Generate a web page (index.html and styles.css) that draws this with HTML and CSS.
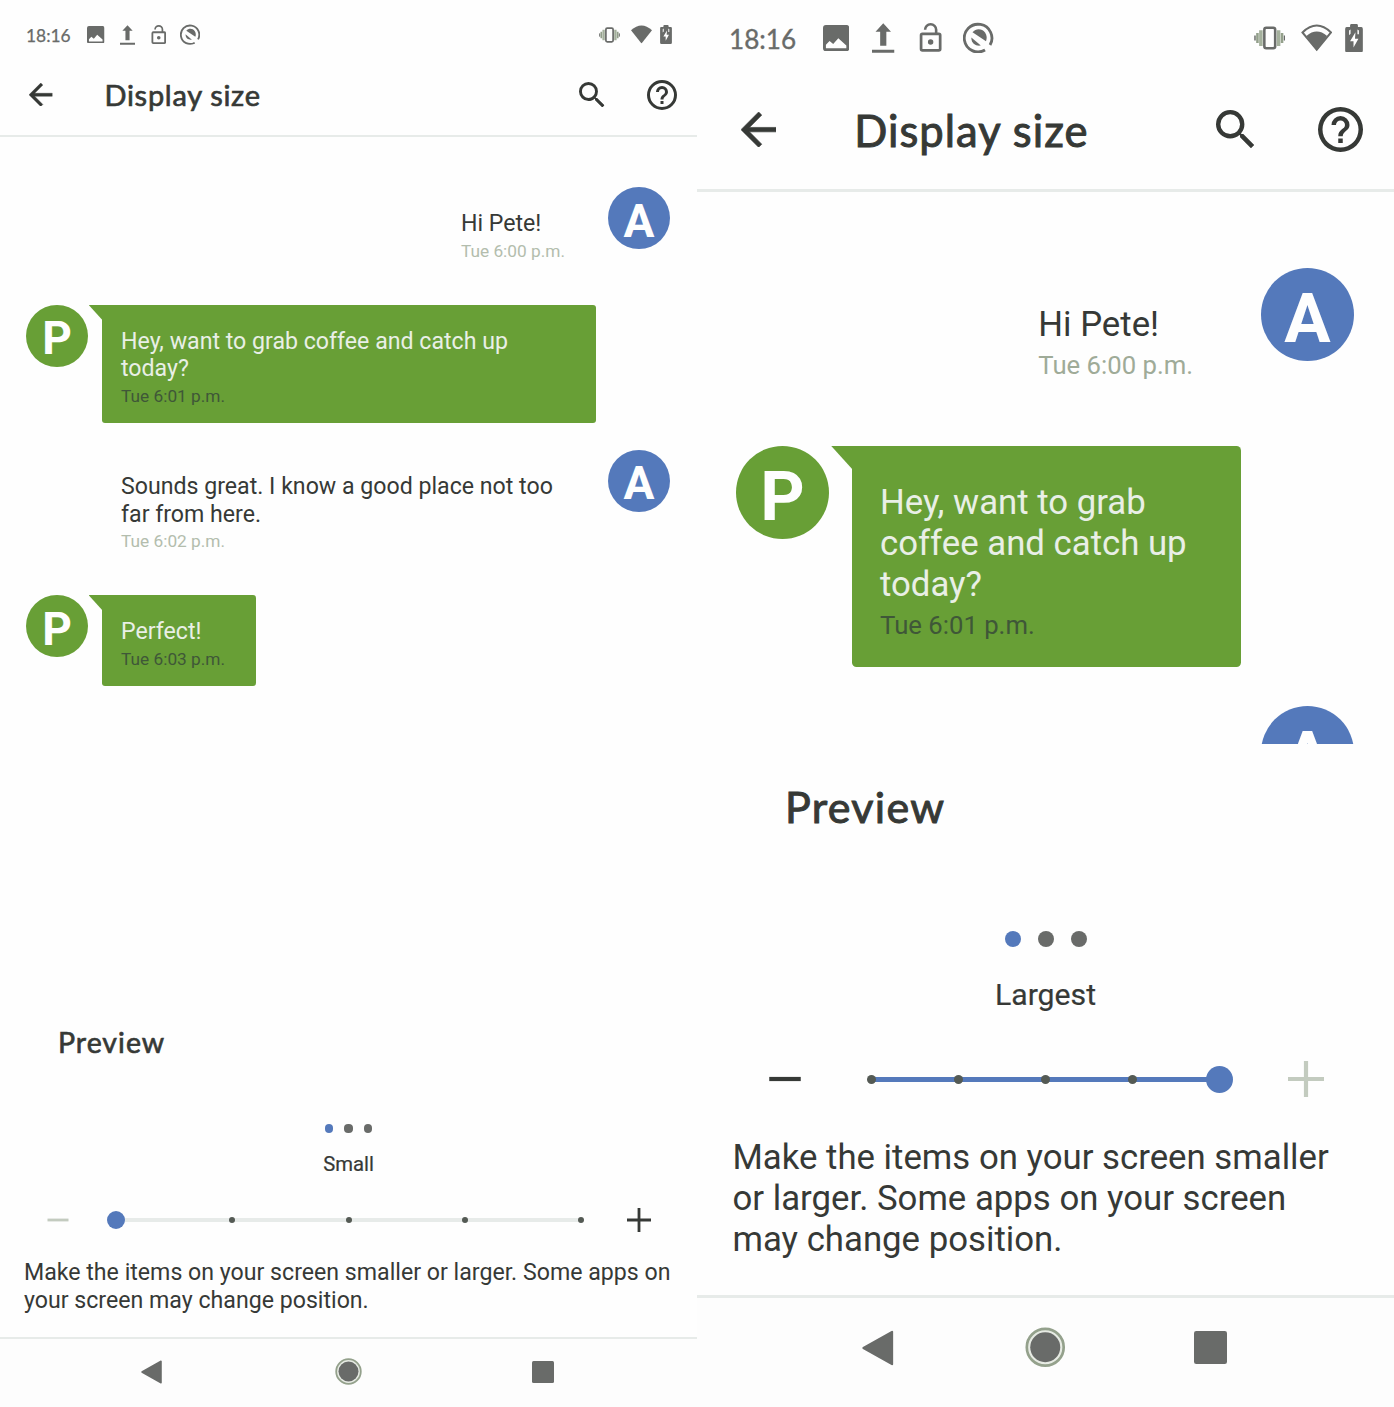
FILE: index.html
```html
<!DOCTYPE html>
<html lang="en">
<head>
<meta charset="utf-8">
<title>Display size</title>
<link rel="stylesheet" href="styles.css">
</head>
<body>
<svg class="defs" width="0" height="0">
  <symbol id="image" viewBox="3 3 18 18"><path d="M21 19V5a2 2 0 0 0-2-2H5a2 2 0 0 0-2 2v14a2 2 0 0 0 2 2h14a2 2 0 0 0 2-2zM5 19v-2.500l2.500-2.500 2.500 2 3.500-4 5.500 5v2z"/></symbol>
  <symbol id="upload" viewBox="0 0 16 21"><path d="M8 0l5.500 6H10.200v10H5.800V6H2.500zM0 18.800h16V21H0z"/></symbol>
  <symbol id="lock" viewBox="4 1 16 22"><path d="M12 17a2 2 0 1 0 0-4 2 2 0 0 0 0 4zm6-9h-1V6A5 5 0 0 0 7 6h1.900a3.100 3.100 0 0 1 6.200 0v2H6a2 2 0 0 0-2 2v10a2 2 0 0 0 2 2h12a2 2 0 0 0 2-2V10a2 2 0 0 0-2-2zm0 12H6V10h12z"/></symbol>
  <symbol id="ring" viewBox="0 0 31 31"><path d="M22 28A13.800 13.800 0 1 1 27 23" fill="none" stroke="currentColor" stroke-width="2.800"/><path d="M9.500 10.200C13 6 19 6.500 22 10.500c2 3 2 6 1 8.600z"/><path d="M8.300 15.500l9.500 8c-4.500.8-9.500-1.500-9.500-8z"/></symbol>
  <symbol id="vibrate" viewBox="0 0 32 24"><rect x="10.500" y="1.500" width="11" height="21" rx="2" fill="none" stroke="currentColor" stroke-width="2.600"/><path d="M7 4v16M25 4v16" stroke="#a4b09c" stroke-width="3.600"/><path d="M3.500 7v10M28.500 7v10" stroke="#93a08b" stroke-width="2.600"/><path d="M1 9.500v5M31 9.500v5" stroke="currentColor" stroke-width="1.500"/></symbol>
  <symbol id="wifi" viewBox="0 0 32 28"><path d="M1.500 8.500Q16-5.500 30.500 8.500L16 26z" fill="none" stroke="currentColor" stroke-width="2"/><path d="M5.500 12Q16 3 26.500 12L16 27z"/></symbol>
  <symbol id="wifi-full" viewBox="0 0 32 28"><path d="M0 8Q16-7 32 8L16 28z"/></symbol>
  <symbol id="battery" viewBox="0 0 18 29"><path d="M5 1.500Q5 0 6.500 0h5Q13 0 13 1.500V3h3.500Q18 3 18 5v22q0 2-2 2H2q-2 0-2-2V5q0-2 1.500-2H5z"/><path d="M10.500 8.500L5 17.500h3.500V24l5-9h-3.500zM4 6.500l1.500-1v4.500L4 11.500zM12.500 5.500l1.500 1v4h-1.500z" fill="#fff"/></symbol>
  <symbol id="back" viewBox="4 4 16 16"><path d="M20 11H7.830l5.590-5.590L12 4l-8 8 8 8 1.410-1.410L7.830 13H20z" stroke="currentColor" stroke-width=".3"/></symbol>
  <symbol id="search" viewBox="3 3 17.500 17.500"><path d="M15.500 14h-.79l-.28-.27A6.471 6.471 0 0 0 16 9.500 6.500 6.500 0 1 0 9.500 16c1.610 0 3.090-.59 4.230-1.570l.27.28v.79l5 4.990L20.490 19zm-6 0a4.500 4.500 0 1 1 0-9 4.500 4.500 0 0 1 0 9z"/></symbol>
  <symbol id="help" viewBox="2 2 20 20"><path d="M11 18h2v-2h-2zm1-16a10 10 0 1 0 0 20 10 10 0 0 0 0-20zm0 18a8 8 0 1 1 0-16 8 8 0 0 1 0 16zm0-14a4 4 0 0 0-4 4h2a2 2 0 1 1 4 0c0 2-3 1.750-3 5h2c0-2.250 3-2.500 3-5a4 4 0 0 0-4-4z"/></symbol>
  <symbol id="minus" viewBox="0 0 24 24"><path d="M1.500 10.600h21v2.800h-21z"/></symbol>
  <symbol id="plus" viewBox="0 0 24 24"><path d="M0 10.600h10.600V0h2.800v10.600H24v2.800H13.400V24h-2.800V13.400H0z"/></symbol>
  <symbol id="nav-back" viewBox="0 0 22 24"><path d="M20.500 1v22L1 12z" stroke="currentColor" stroke-width="1.500" stroke-linejoin="round"/></symbol>
  <symbol id="nav-home" viewBox="0 0 27 27"><circle cx="13.500" cy="13.500" r="12.300" fill="#e7ebe4" stroke="#94a18c" stroke-width="1.800"/><circle cx="13.500" cy="13.500" r="10"/></symbol>
  <symbol id="nav-recent" viewBox="0 0 22 22"><rect width="22" height="22" rx="1.500"/></symbol>
</svg>

<main class="screens">
  <section class="phone small">
    <div class="status">
      <span class="clock">18:16</span>
      <svg class="s-image"><use href="#image"/></svg>
      <svg class="s-upload"><use href="#upload"/></svg>
      <svg class="s-lock"><use href="#lock"/></svg>
      <svg class="s-ring"><use href="#ring"/></svg>
      <svg class="s-vibrate"><use href="#vibrate"/></svg>
      <svg class="s-wifi"><use href="#wifi-full"/></svg>
      <svg class="s-battery"><use href="#battery"/></svg>
    </div>
    <header class="toolbar">
      <svg class="t-back"><use href="#back"/></svg>
      <h1>Display size</h1>
      <svg class="t-search"><use href="#search"/></svg>
      <svg class="t-help"><use href="#help"/></svg>
    </header>
    <div class="chat">
      <div class="row out"><div class="msg hi"><p>Hi Pete!</p><time>Tue 6:00 p.m.</time></div><b class="avatar">A</b></div>
      <div class="row"><b class="avatar">P</b><div class="msg bubble wide"><p>Hey, want to grab coffee and catch up<br>today?</p><time>Tue 6:01 p.m.</time></div></div>
      <div class="row out"><div class="msg sounds"><p>Sounds great. I know a good place not too<br>far from here.</p><time>Tue 6:02 p.m.</time></div><b class="avatar">A</b></div>
      <div class="row"><b class="avatar">P</b><div class="msg bubble"><p>Perfect!</p><time>Tue 6:03 p.m.</time></div></div>
    </div>
    <h2>Preview</h2>
    <div class="dots"><i class="on"></i><i></i><i></i></div>
    <div class="size">Small</div>
    <div class="slider">
      <svg class="step off"><use href="#minus"/></svg>
      <div class="track"><i class="thumb"></i><i></i><i></i><i></i><i></i></div>
      <svg class="step"><use href="#plus"/></svg>
    </div>
    <p class="note">Make the items on your screen smaller or larger. Some apps on<br>your screen may change position.</p>
    <nav><svg class="n-back"><use href="#nav-back"/></svg><svg class="n-home"><use href="#nav-home"/></svg><svg class="n-recent"><use href="#nav-recent"/></svg></nav>
  </section>

  <section class="phone large">
    <div class="status">
      <span class="clock">18:16</span>
      <svg class="s-image"><use href="#image"/></svg>
      <svg class="s-upload"><use href="#upload"/></svg>
      <svg class="s-lock"><use href="#lock"/></svg>
      <svg class="s-ring"><use href="#ring"/></svg>
      <svg class="s-vibrate"><use href="#vibrate"/></svg>
      <svg class="s-wifi"><use href="#wifi"/></svg>
      <svg class="s-battery"><use href="#battery"/></svg>
    </div>
    <header class="toolbar">
      <svg class="t-back"><use href="#back"/></svg>
      <h1>Display size</h1>
      <svg class="t-search"><use href="#search"/></svg>
      <svg class="t-help"><use href="#help"/></svg>
    </header>
    <div class="chat">
      <div class="row out"><div class="msg hi"><p>Hi Pete!</p><time>Tue 6:00 p.m.</time></div><b class="avatar">A</b></div>
      <div class="row"><b class="avatar">P</b><div class="msg bubble wide"><p>Hey, want to grab<br>coffee and catch up<br>today?</p><time>Tue 6:01 p.m.</time></div></div>
      <div class="row out"><b class="avatar">A</b></div>
    </div>
    <h2>Preview</h2>
    <div class="dots"><i class="on"></i><i></i><i></i></div>
    <div class="size">Largest</div>
    <div class="slider">
      <svg class="step"><use href="#minus"/></svg>
      <div class="track"><i></i><i></i><i></i><i></i><i class="thumb"></i></div>
      <svg class="step off"><use href="#plus"/></svg>
    </div>
    <p class="note">Make the items on your screen smaller<br>or larger. Some apps on your screen<br>may change position.</p>
    <nav><svg class="n-back"><use href="#nav-back"/></svg><svg class="n-home"><use href="#nav-home"/></svg><svg class="n-recent"><use href="#nav-recent"/></svg></nav>
  </section>
</main>
</body>
</html>
```
FILE: styles.css
```css
* { box-sizing: border-box; margin: 0; padding: 0; }
body { background: #fefefe; font-family: Roboto, "Liberation Sans", sans-serif; color: #363936; }
svg { display: block; flex: none; fill: currentColor; }
.defs { position: absolute; }
.screens { display: flex; width: 1394px; height: 1407px; overflow: hidden; }
.phone { width: 697px; height: 1407px; display: flex; flex-direction: column; white-space: nowrap; }
.phone > * { flex: none; }
.small {
  --u: 1px; --text: 23.15px; --line: 27.5px; --time: 17.3px;
}
.large {
  --u: 1.5px; --text: 34.75px; --line: 41px; --time: 25.7px;
}

/* Status bar */
.status { display: flex; align-items: center; height: 69px; padding: 0 25px 0 26px; color: #696b69; }
.large .status { height: 76px; padding: 0 31px 0 32px; }
.clock { width: calc(61 * var(--u)); font-family: Lato, sans-serif; font-size: calc(17.400 * var(--u)); -webkit-text-stroke: calc(.25 * var(--u)) currentColor; padding-top: 1.5px; }
.large .clock { width: 94px; }
.s-image { width: calc(17.500 * var(--u)); height: calc(17.500 * var(--u)); }
.s-upload { width: calc(15 * var(--u)); height: calc(20 * var(--u)); margin-left: calc(15.200 * var(--u)); }
.s-lock { width: calc(15.500 * var(--u)); height: calc(20 * var(--u)); margin-left: calc(16 * var(--u)); }
.s-ring { width: calc(20.700 * var(--u)); height: calc(20.700 * var(--u)); margin-left: calc(13.500 * var(--u)); }
.large .s-ring { margin-left: 21px; }
.s-vibrate { width: calc(21 * var(--u)); height: calc(16 * var(--u)); margin-left: auto; }
.s-wifi { width: calc(21 * var(--u)); height: calc(18.500 * var(--u)); margin-left: calc(10.500 * var(--u)); }
.s-battery { width: calc(12 * var(--u)); height: calc(19 * var(--u)); margin-left: calc(8.500 * var(--u)); }

/* Toolbar */
.toolbar { display: flex; align-items: center; height: 68px; padding: 0 20px 15px 29px; border-bottom: 2px solid #e7ebe9; }
.large .toolbar { height: 116px; padding: 0 31px 6px 44px; border-bottom-width: 3px; }
.t-back { width: calc(23.500 * var(--u)); height: calc(23.500 * var(--u)); }
h1, h2 { font-family: Lato, sans-serif; font-weight: 400; -webkit-text-stroke: calc(.65 * var(--u)) currentColor; }
h1 { font-size: calc(29 * var(--u)); line-height: 1.2; letter-spacing: calc(.7 * var(--u)); margin-left: 52px; padding-top: calc(2 * var(--u)); }
.large h1 { margin-left: 78px; padding-top: 2px; }
.t-search { width: calc(25.500 * var(--u)); height: calc(25.500 * var(--u)); margin-left: auto; }
.t-help { width: calc(30 * var(--u)); height: calc(30 * var(--u)); margin-left: calc(42.300 * var(--u)); }

/* Conversation preview */
.chat { display: flex; flex-direction: column; gap: 27px; height: 863px; padding: 50px 27px 0 26px; overflow: hidden; }
.large .chat { height: 552px; padding: 76px 40px 0 39px; gap: 39px; }
.row { display: flex; align-items: flex-start; flex: none; }
.out { justify-content: flex-end; }
.avatar { flex: none; display: flex; align-items: center; justify-content: center; width: calc(62 * var(--u)); height: calc(62 * var(--u)); border-radius: 50%; background: #689f36; color: #fefefe; font-size: calc(46 * var(--u)); line-height: 1; padding-top: calc(5 * var(--u)); }
.out .avatar { background: #5479bb; }
.msg { font-size: var(--text); line-height: var(--line); padding: 23.2px 19px 12.500px; }
.large .msg { padding: 36px 28px 21px; }
.msg time { display: block; font-size: var(--time); color: #b3bdad; }
.large .msg time { color: #9fab98; }
.hi { margin-right: 24px; }
.large .hi { margin-right: 40px; }
.sounds { width: 494px; margin-right: 12px; }
.bubble { position: relative; margin-left: 14px; border-radius: calc(3 * var(--u)); border-top-left-radius: 0; background: #689f36; color: #e9efe6; min-width: 154px; }
.large .bubble { margin-left: 23px; }
.small .wide { width: 494px; }
.large .wide { width: 389px; }
.bubble::before { content: ""; position: absolute; top: 0; right: calc(100% - 1px); width: calc(14.500 * var(--u)); height: calc(16 * var(--u)); background: #689f36; clip-path: polygon(0 0, 100% 0, 100% 100%); }
.phone .bubble time { color: #3f5738; }

/* Preview controls */
h2 { height: 84px; padding-left: 58px; font-size: 28.500px; line-height: 84px; letter-spacing: 1px; }
.large h2 { height: 126px; padding-left: 88px; font-size: 43px; line-height: 125px; letter-spacing: 1.3px; }
.dots { display: flex; justify-content: center; align-items: center; gap: 11.300px; height: 62px; padding-top: 27px; }
.large .dots { height: 98px; padding-top: 40px; gap: 17px; }
.dots i { width: 8.200px; height: 8.200px; border-radius: 50%; background: #696b69; }
.large .dots i { width: 16px; height: 16px; }
.dots .on, .large .dots .on { background: #5479bb; }
.size { text-align: center; font-size: 20.300px; line-height: 36px; height: 36px; -webkit-text-stroke: .2px currentColor; }
.large .size { font-size: 30.200px; height: 54px; line-height: 54px; }
.slider { display: flex; align-items: center; justify-content: space-between; height: 76px; padding: 0 46px; }
.large .slider { height: 114px; padding: 0 70px; }
.step { width: calc(24 * var(--u)); height: calc(24 * var(--u)); }
.off { color: #c3cbbf; }
.track { display: flex; justify-content: space-between; align-items: center; width: 465px; height: 4px; background: #e7ebe9; }
.large .track { width: 348px; height: 5px; background: #5479bb; }
.track i { width: calc(6 * var(--u)); height: calc(6 * var(--u)); margin: 0 calc(-3 * var(--u)); border-radius: 50%; background: #545a54; }
.track .thumb { width: calc(18 * var(--u)); height: calc(18 * var(--u)); margin: 0 calc(-9 * var(--u)); background: #5479bb; }
.note { height: 79px; padding: 1px 0 0 24px; font-size: var(--text); line-height: var(--line); }
.large .note { height: 159px; padding-left: 35.500px; }
.phone nav { display: flex; align-items: center; flex: 1 0 0; border-top: 2px solid #e7ebe9; background: #fdfdfd; color: #696b69; padding: 0 0 3px 141px; }
.phone.large nav { border-top-width: 3px; padding: 0 0 10px 165px; }
.n-back { width: calc(21.500 * var(--u)); height: calc(24 * var(--u)); }
.n-home { width: calc(27 * var(--u)); height: calc(27 * var(--u)); margin-left: 172px; }
.n-recent { width: calc(22 * var(--u)); height: calc(22 * var(--u)); margin-left: 170px; }
.large .n-home { margin-left: 131px; }
.large .n-recent { margin-left: 128px; }
```
